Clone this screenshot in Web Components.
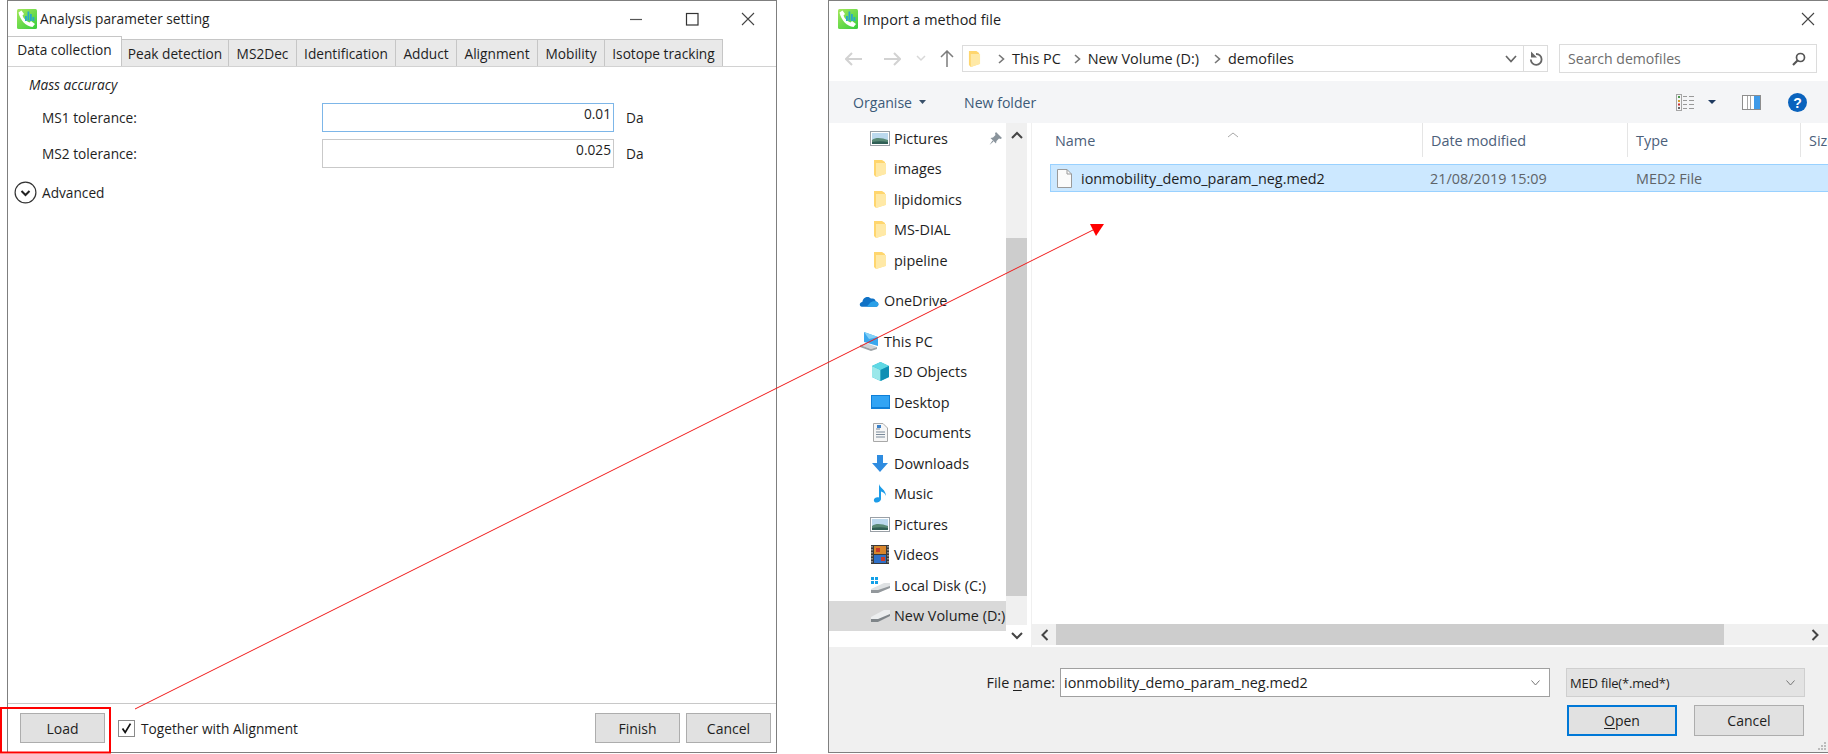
<!DOCTYPE html>
<html>
<head>
<meta charset="utf-8">
<title>Analysis parameter setting</title>
<style>
  html, body { margin: 0; padding: 0; background: #fff; }
  body { width: 1828px; height: 754px; overflow: hidden; position: relative; display: flex; align-items: flex-start; font-family: "Open Sans", "Liberation Sans", sans-serif; color: #1e1e1e; }
</style>
</head>
<body>
<param-window></param-window>
<file-dialog></file-dialog>
<arrow-overlay></arrow-overlay>

<script>
const FONT = '"Open Sans", "Liberation Sans", sans-serif';

class AppIcon extends HTMLElement {
    constructor() {
        super();
        this.attachShadow({ mode: 'open' });
        this.shadowRoot.innerHTML = `
            <style>
                :host { display: block; width: 20px; height: 20px; flex: none; }
                svg { display: block; }
            </style>
            <svg width="20" height="20" viewBox="0 0 20 20">
                <defs>
                    <linearGradient id="g" x1="0" y1="0" x2="0.8" y2="1">
                        <stop offset="0" stop-color="#a6e85c"/>
                        <stop offset="1" stop-color="#3fd03f"/>
                    </linearGradient>
                </defs>
                <rect width="20" height="20" rx="1.5" fill="url(#g)"/>
                <path d="M1.5 3.5 L4.5 1.5 L7 5 L5.5 6.5 C6.5 9.5 9 12 12.5 13.5 L14 12 L18 15 L15.5 18 C9 17.5 3 11 1.5 3.5 Z" fill="#fff"/>
                <rect x="8" y="7" width="1.8" height="5" fill="#28a8c8"/>
                <rect x="10.5" y="2.5" width="1.8" height="9" fill="#28a8c8"/>
                <rect x="13" y="5" width="1.8" height="7" fill="#28a8c8"/>
                <rect x="15.5" y="8" width="1.8" height="4" fill="#28a8c8"/>
            </svg>
        `;
    }
}
customElements.define('app-icon', AppIcon);

class WinButton extends HTMLElement {
    constructor() {
        super();
        this.attachShadow({ mode: 'open' });
        this.shadowRoot.innerHTML = `
            <style>
                :host {
                    display: flex; align-items: center; justify-content: center;
                    box-sizing: border-box; height: 30px; width: 85px; flex: none;
                    background: #e1e1e1; border: 1px solid #adadad;
                    font-size: 14px; color: #1e1e1e;
                }
                :host([primary]) { border: 2px solid #0078d7; }
            </style>
            <slot></slot>
        `;
    }
}
customElements.define('win-button', WinButton);

class ParamRow extends HTMLElement {
    constructor() {
        super();
        this.attachShadow({ mode: 'open' });
        const focus = this.hasAttribute('focus');
        this.shadowRoot.innerHTML = `
            <style>
                :host { display: flex; align-items: center; height: 29px; padding-left: 34px; }
                .label { width: 280px; flex: none; }
                .box {
                    box-sizing: border-box; width: 292px; height: 29px; flex: none;
                    border: 1.5px solid ${focus ? '#7db6e8' : '#c9c9c9'};
                    text-align: right; padding: 0 2px 0 0; line-height: 19px;
                }
                .unit { margin-left: 12px; }
            </style>
            <span class="label">${this.getAttribute('label')}</span>
            <div class="box">${this.getAttribute('value')}</div>
            <span class="unit">Da</span>
        `;
    }
}
customElements.define('param-row', ParamRow);

class ParamWindow extends HTMLElement {
    constructor() {
        super();
        this.attachShadow({ mode: 'open' });
        const tabs = [
            ['Data collection', 114], ['Peak detection', 107], ['MS2Dec', 68], ['Identification', 99],
            ['Adduct', 61], ['Alignment', 81], ['Mobility', 67], ['Isotope tracking', 118]
        ];
        this.shadowRoot.innerHTML = `
            <style>
                :host {
                    display: flex; flex-direction: column; flex: none; box-sizing: border-box;
                    width: 770px; height: 753px; margin-left: 7px;
                    border: 1px solid #7f7f7f; border-width: 1px 1.5px 1.5px 1.5px;
                    font-family: ${FONT}; font-size: 13.7px; color: #1e1e1e;
                }
                .title { display: flex; align-items: center; height: 35px; padding-left: 9px; flex: none; }
                .title span { margin-left: 3px; flex: 1; }
                .ctl { width: 56px; height: 35px; display: flex; align-items: center; justify-content: center; }
                .tabs { display: flex; align-items: flex-end; height: 30px; flex: none; }
                .tab {
                    box-sizing: border-box; height: 27px; background: #e9e9e9;
                    border: 1.5px solid #c6c6c6; border-bottom: 0; border-left-width: 0;
                    display: flex; align-items: center; justify-content: center; flex: none; white-space: nowrap;
                }
                .tab.on { height: 30px; background: #fff; border-left-width: 0; padding-bottom: 5px; }
                .panel { flex: 1; border-top: 1.5px solid #d2d2d2; padding-top: 8px; display: flex; flex-direction: column; margin-top: -0.5px; }
                .group { font-style: italic; padding-left: 21px; height: 20px; line-height: 20px; margin-bottom: 8px; }
                param-row + param-row { margin-top: 7px; }
                .adv { display: flex; align-items: center; gap: 5px; padding-left: 6px; margin-top: 13px; }
                .foot { display: flex; align-items: center; height: 49px; flex: none; border-top: 1.5px solid #c8c8c8; padding: 0 5px 0 12px; box-sizing: border-box; }
                .check { display: flex; align-items: center; margin-left: 13px; flex: 1; }
                .box { box-sizing: border-box; width: 17px; height: 17px; border: 1px solid #8a8a8a; margin-right: 6px; display: block; }
                win-button + win-button { margin-left: 6px; }
            </style>
            <div class="title">
                <app-icon></app-icon><span>Analysis parameter setting</span>
                <div class="ctl"><svg width="14" height="14"><path d="M1 7.5H13" stroke="#555" stroke-width="1.2"/></svg></div>
                <div class="ctl"><svg width="14" height="14"><rect x="1.5" y="1.5" width="11.5" height="11.5" fill="none" stroke="#333" stroke-width="1.2"/></svg></div>
                <div class="ctl"><svg width="14" height="14"><path d="M1 1L13 13M13 1L1 13" stroke="#444" stroke-width="1.1"/></svg></div>
            </div>
            <div class="tabs">
                ${tabs.map((t, i) => `<div class="tab${i === 0 ? ' on' : ''}" style="width:${t[1]}px">${t[0]}</div>`).join('')}
            </div>
            <div class="panel">
                <div class="group">Mass accuracy</div>
                <param-row label="MS1 tolerance:" value="0.01" focus></param-row>
                <param-row label="MS2 tolerance:" value="0.025"></param-row>
                <div class="adv">
                    <svg width="23" height="23" viewBox="0 0 23 23"><circle cx="11.5" cy="11.5" r="10.4" fill="none" stroke="#333" stroke-width="1.2"/><path d="M7.5 10L11.5 14L15.5 10" fill="none" stroke="#222" stroke-width="2"/></svg>
                    <span>Advanced</span>
                </div>
            </div>
            <div class="foot">
                <win-button>Load</win-button>
                <div class="check">
                    <svg class="box" viewBox="0 0 17 17"><path d="M4 8.5L7 13L13 3" fill="none" stroke="#111" stroke-width="2"/></svg>
                    <span>Together with Alignment</span>
                </div>
                <win-button>Finish</win-button>
                <win-button>Cancel</win-button>
            </div>
        `;
    }
}
customElements.define('param-window', ParamWindow);

const FOLDER = `<svg width="14" height="19" viewBox="0 0 14 19"><path d="M1 1H9L12 3V15L3 18L1 16Z" fill="#ffd66e"/><path d="M3 4H13V15L3 18Z" fill="#ffe9a6"/></svg>`;
const PICTURE = `<svg width="20" height="15" viewBox="0 0 20 15"><rect x=".5" y=".5" width="19" height="14" fill="#fff" stroke="#9aa0a6"/><rect x="2" y="2" width="16" height="11" fill="#bcd9ee"/><path d="M2 9C6 6 12 7 18 9V13H2Z" fill="#5a8a76"/><path d="M2 11C7 10 13 10 18 11V13H2Z" fill="#2f5f55"/></svg>`;
const ICONS = {
    folder: FOLDER,
    picture: PICTURE,
    onedrive: `<svg width="21" height="13" viewBox="0 0 21 13"><path d="M3 13C0 13 0 8.500 3.500 8C4 3 10 1 12.500 4.500C16 3.500 17.500 6 17.500 7.500C21 7.500 21.500 13 18 13Z" fill="#0f72c6"/><path d="M8 13L12 8.500C14 7 17 7 17.500 7.500C21 7.500 21.500 13 18 13Z" fill="#2aa0e8"/></svg>`,
    pc: `<svg width="20" height="20" viewBox="0 0 20 20"><path d="M5 1L19 6V15L5 11Z" fill="#3aa8ee"/><path d="M5 1L19 6L10 8Z" fill="#84d0f6"/><path d="M1 14L12 18L18 16L7 12Z" fill="#cfd3d6"/><path d="M1 14V16L12 20L18 18V16L12 18Z" fill="#9ca2a6"/></svg>`,
    cube: `<svg width="19" height="19" viewBox="0 0 19 19"><path d="M9.500 0L18 4V15L9.500 19L1 15V4Z" fill="#29b6cf"/><path d="M1 4L9.500 8V19L1 15Z" fill="#9be8ea"/><path d="M9.500 0L18 4L9.500 8L1 4Z" fill="#5fd8e4"/><path d="M9.500 8L18 4V15L9.500 19Z" fill="#0f8fb4"/></svg>`,
    desktop: `<svg width="19" height="14" viewBox="0 0 19 14"><rect width="19" height="14" fill="#0f7fd8"/><rect x="1" y="1" width="17" height="11" fill="#32a4f4"/></svg>`,
    docs: `<svg width="15" height="19" viewBox="0 0 15 19"><path d="M.5.5H10L14.500 5V18.500H.5Z" fill="#f6f6f6" stroke="#a8a8a8"/><path d="M3 6H7M3 9H12M3 11.500H12M3 14H12" stroke="#7a8a9a"/><path d="M4 2H8V5H4Z" fill="#3a80c8"/></svg>`,
    down: `<svg width="16" height="17" viewBox="0 0 16 17"><path d="M5 0H11V8H16L8 17L0 8H5Z" fill="#2f8ce0"/></svg>`,
    music: `<svg width="14" height="19" viewBox="0 0 14 19"><path d="M6 0C7 4 13 6 13 12C12 9 9.500 8 8 7.500V15C8 18 2 20 1 17C0 14 4 12.500 6 13.500Z" fill="#1c9ce8"/></svg>`,
    video: `<svg width="18" height="19" viewBox="0 0 18 19"><rect width="18" height="19" fill="#3a3a3a"/><rect x="3" y="1" width="12" height="8" fill="#d8862c"/><rect x="3" y="10" width="12" height="8" fill="#2f70c8"/><path d="M5 3H9V7H5ZM10 12H14V16H10Z" fill="#c83a2a"/><path d="M1 1V18M17 1V18" stroke="#ddd" stroke-dasharray="1.500 1.500"/></svg>`,
    cdrive: `<svg width="19" height="16" viewBox="0 0 19 16"><path d="M0 0H3V3H0ZM4 0H7V3H4ZM0 4H3V7H0ZM4 4H7V7H4Z" fill="#12a0e8"/><path d="M0 12L13 6H19V10L7 16H0Z" fill="#dfe2e4"/><path d="M0 13H7L19 9V11L7 16H0Z" fill="#93989c"/></svg>`,
    ddrive: `<svg width="19" height="12" viewBox="0 0 19 12"><path d="M0 7L13 0H19V5L7 12H0Z" fill="#eceeef"/><path d="M0 9H7L19 4V6L7 12H0Z" fill="#7f8589"/></svg>`
};

class NavItem extends HTMLElement {
    constructor() {
        super();
        this.attachShadow({ mode: 'open' });
        const top = this.hasAttribute('top');
        this.shadowRoot.innerHTML = `
            <style>
                :host {
                    display: flex; align-items: center; height: 30.5px; flex: none;
                    padding-left: ${top ? '30px' : '41px'}; position: relative; box-sizing: border-box;
                    white-space: nowrap; color: #1e1e1e;
                }
                :host([selected]) { background: #d9d9d9; }
                .ico { width: 20px; display: flex; justify-content: center; margin-right: ${top ? '5px' : '4px'}; flex: none; }
                .pin { margin-left: auto; margin-right: 4px; display: flex; }
            </style>
            <div class="ico">${ICONS[this.getAttribute('icon')]}</div>
            <span>${this.getAttribute('text')}</span>
            ${this.hasAttribute('pin') ? `<div class="pin"><svg width="13" height="13" viewBox="0 0 13 13"><path d="M7 0L13 6L11.500 7L10 6.500L7.500 9L7 11.500L1.500 6L4 5.500L6.500 3L6 1.500ZM3.500 8.500L4.500 9.500L.5 13Z" fill="#8a949c"/></svg></div>` : ''}
        `;
    }
}
customElements.define('nav-item', NavItem);

class FileDialog extends HTMLElement {
    constructor() {
        super();
        this.attachShadow({ mode: 'open' });
        this.shadowRoot.innerHTML = `
            <style>
                :host {
                    display: flex; flex-direction: column; flex: none; box-sizing: border-box;
                    width: 1000px; height: 753px; margin-left: 51px;
                    border: 1px solid #7f7f7f; border-width: 1px 0 1.5px 1.5px;
                    font-family: ${FONT}; font-size: 14.4px; color: #1e1e1e;
                }
                .title { display: flex; align-items: center; height: 35px; padding-left: 9px; flex: none; }
                .title span { margin-left: 5px; flex: 1; padding-top: 1px; }
                .close { margin-right: 13px; display: flex; }
                .addr { display: flex; align-items: center; height: 45px; flex: none; padding-left: 16px; }
                .navbtn { display: flex; flex: none; }
                .path {
                    box-sizing: border-box; display: flex; align-items: center; width: 586px; height: 27px;
                    margin-left: 8px; border: 1.5px solid #dcdcdc; padding-left: 5px; flex: none;
                }
                .crumb { margin-left: 7px; }
                .sep { margin-left: 13px; display: flex; }
                .sep.first { margin-left: 17px; }
                .sep.last { margin-left: 15px; }
                .path .right { margin-left: auto; display: flex; align-items: center; height: 100%; }
                .refresh { border-left: 1px solid #dcdcdc; width: 23px; height: 100%; display: flex; align-items: center; justify-content: center; margin-left: 6px; }
                .search {
                    box-sizing: border-box; display: flex; align-items: center; justify-content: space-between;
                    width: 258px; height: 29px; margin-left: 11px; border: 1.5px solid #dcdcdc; padding: 0 10px 0 8px; color: #6d6d6d; flex: none; font-size: 14.1px;
                }
                .tool { display: flex; align-items: center; height: 42px; background: #f4f5f7; flex: none; padding-left: 24px; color: #3c5a78; font-size: 14.1px; }
                .tool .spacer { flex: 1; }
                .main { flex: 1; display: flex; min-height: 0; }
                .nav { width: 177px; flex: none; display: flex; flex-direction: column; overflow: hidden; }
                .gap { height: 10px; flex: none; }
                .vscroll { width: 21px; flex: none; display: flex; flex-direction: column; background: #f0f0f0; }
                .vscroll .thumb { background: #cdcdcd; height: 358px; margin-top: 115px; flex: none; }
                .sb-up, .sb-down { position: relative; display: flex; justify-content: center; align-items: center; flex: none; }
                .sb-up { height: 0; top: 12px; }
                .sb-down { margin-top: auto; height: 22px; background: #fff; }
                .list { flex: 1; display: flex; flex-direction: column; margin-left: 4px; border-left: 1.5px solid #f0f0f0; min-width: 0; position: relative; }
                .head { display: flex; height: 34px; flex: none; color: #4c607a; }
                .col { box-sizing: border-box; padding-left: 8px; padding-top: 8px; border-right: 1px solid #e5e5e5; flex: none; white-space: nowrap; }
                .caret { position: absolute; left: 195px; top: 0; }
                .rows { flex: 1; padding: 7px 0 0 18px; }
                .row { box-sizing: border-box; display: flex; align-items: center; height: 28px; background: #cce8ff; border: 1px solid #99d1ff; border-right: 0; padding-top: 1px; }
                .row .name { width: 379px; padding-left: 6px; display: flex; align-items: center; gap: 9px; flex: none; box-sizing: border-box; }
                .row .date { width: 206px; flex: none; color: #5f6468; }
                .row .type { color: #5f6468; }
                .hscroll { height: 21px; flex: none; background: #f0f0f0; display: flex; align-items: center; padding: 0 9px; margin-bottom: 2px; }
                .hscroll .thumb { background: #cdcdcd; height: 21px; width: 668px; margin-left: 7px; flex: none; }
                .hscroll svg:last-child { margin-left: auto; }
                .bottom { height: 105px; flex: none; background: #f0f0f0; position: relative; display: flex; flex-direction: column; padding: 21px 23px 0 0; box-sizing: border-box; }
                .namerow { display: flex; align-items: center; justify-content: flex-end; }
                .fname { box-sizing: border-box; width: 490px; height: 29px; background: #fff; border: 1px solid #a0a0a0; margin-left: 5px; display: flex; align-items: center; justify-content: space-between; padding: 0 9px 0 3px; }
                .combo { box-sizing: border-box; width: 239px; height: 29px; background: #e3e3e3; border: 1px solid #cfcfcf; margin-left: 16px; display: flex; align-items: center; justify-content: space-between; padding: 0 9px 0 3px; font-size: 13px; letter-spacing: -0.2px; }
                .btnrow { display: flex; justify-content: flex-end; gap: 17px; margin-top: 8px; margin-right: 1px; }
                .btnrow win-button { width: 110px; height: 31px; }
                u { text-decoration-thickness: 1px; text-underline-offset: 2px; }
                .grip { position: absolute; right: 2px; bottom: 2px; display: flex; }
            </style>
            <div class="title">
                <app-icon></app-icon><span>Import a method file</span>
                <div class="close"><svg width="14" height="14"><path d="M1 1L13 13M13 1L1 13" stroke="#444" stroke-width="1.1"/></svg></div>
            </div>
            <div class="addr">
                <div class="navbtn"><svg width="17" height="14" viewBox="0 0 17 14"><path d="M7 1L1 7L7 13M1 7H17" fill="none" stroke="#d2d2d2" stroke-width="2"/></svg></div>
                <div class="navbtn" style="margin-left:22px"><svg width="17" height="14" viewBox="0 0 17 14"><path d="M10 1L16 7L10 13M16 7H0" fill="none" stroke="#d2d2d2" stroke-width="2"/></svg></div>
                <div class="navbtn" style="margin-left:15px"><svg width="10" height="7" viewBox="0 0 10 7"><path d="M1 1L5 5L9 1" fill="none" stroke="#d8d8d8" stroke-width="1.500"/></svg></div>
                <div class="navbtn" style="margin-left:14px"><svg width="14" height="17" viewBox="0 0 14 17"><path d="M1 7L7 1L13 7M7 1V17" fill="none" stroke="#7c7c7c" stroke-width="1.500"/></svg></div>
                <div class="path">
                    ${FOLDER.replace('width="14" height="19"', 'width="13" height="18"')}
                    <span class="sep first"><svg width="7" height="10" viewBox="0 0 7 10"><path d="M1 1L5.500 5L1 9" fill="none" stroke="#777" stroke-width="1.600"/></svg></span>
                    <span class="crumb">This PC</span>
                    <span class="sep"><svg width="7" height="10" viewBox="0 0 7 10"><path d="M1 1L5.500 5L1 9" fill="none" stroke="#777" stroke-width="1.600"/></svg></span>
                    <span class="crumb">New Volume (D:)</span>
                    <span class="sep last"><svg width="7" height="10" viewBox="0 0 7 10"><path d="M1 1L5.500 5L1 9" fill="none" stroke="#777" stroke-width="1.600"/></svg></span>
                    <span class="crumb">demofiles</span>
                    <div class="right">
                        <svg width="12" height="8" viewBox="0 0 12 8"><path d="M1 1L6 6.500L11 1" fill="none" stroke="#666" stroke-width="1.700"/></svg>
                        <div class="refresh"><svg width="14" height="15" viewBox="0 0 14 15"><path d="M7 3A5.400 5.400 0 1 1 1.800 8.500" fill="none" stroke="#666" stroke-width="1.800"/><path d="M2 0.500V6.500H8Z" fill="#666"/></svg></div>
                    </div>
                </div>
                <div class="search">
                    <span>Search demofiles</span>
                    <svg width="14" height="14" viewBox="0 0 14 14"><circle cx="8.500" cy="5.500" r="4" fill="none" stroke="#555" stroke-width="1.700"/><path d="M5.500 8.500L1 13" stroke="#555" stroke-width="2.200"/></svg>
                </div>
            </div>
            <div class="tool">
                <span>Organise</span>
                <svg style="margin-left:7px" width="7" height="4"><path d="M0 0H7L3.500 4Z" fill="#39506a"/></svg>
                <span style="margin-left:38px">New folder</span>
                <span class="spacer"></span>
                <svg width="19" height="17" viewBox="0 0 19 17"><rect x=".5" y=".5" width="5" height="16" fill="#f4f5f7" stroke="#a5a5a5"/><path d="M2 3H4" stroke="#4a9a4a" stroke-width="2"/><path d="M2 7H4" stroke="#d8a030" stroke-width="2"/><path d="M2 10.500H4" stroke="#c83030" stroke-width="2"/><path d="M2 14H4" stroke="#666" stroke-width="2"/><path d="M7 2.500H11M13 2.500H18M7 6.500H11M13 6.500H18M7 10.500H11M13 10.500H18M7 14.500H11M13 14.500H18" stroke="#999" stroke-width="1.200"/></svg>
                <svg style="margin-left:13px" width="8" height="4"><path d="M0 0H8L4 4Z" fill="#1f3a60"/></svg>
                <svg style="margin-left:26px" width="19" height="15" viewBox="0 0 19 15"><rect x=".5" y=".5" width="18" height="14" fill="#fff" stroke="#8d8d8d"/><rect x="12" y="1" width="6" height="13" fill="#3f9ae8"/><path d="M5.500 1V14M8.500 1V14" stroke="#a8a8a8"/></svg>
                <svg style="margin-left:27px;margin-right:21px" width="19" height="19" viewBox="0 0 19 19"><circle cx="9.500" cy="9.500" r="9.500" fill="#0a63bd"/><text x="9.500" y="14.500" text-anchor="middle" fill="#fff" font-family="'Liberation Sans'" font-size="14" font-weight="700">?</text></svg>
            </div>
            <div class="main">
                <div class="nav">
                    <nav-item icon="picture" text="Pictures" pin></nav-item>
                    <nav-item icon="folder" text="images"></nav-item>
                    <nav-item icon="folder" text="lipidomics"></nav-item>
                    <nav-item icon="folder" text="MS-DIAL"></nav-item>
                    <nav-item icon="folder" text="pipeline"></nav-item>
                    <div class="gap"></div>
                    <nav-item icon="onedrive" text="OneDrive" top></nav-item>
                    <div class="gap"></div>
                    <nav-item icon="pc" text="This PC" top></nav-item>
                    <nav-item icon="cube" text="3D Objects"></nav-item>
                    <nav-item icon="desktop" text="Desktop"></nav-item>
                    <nav-item icon="docs" text="Documents"></nav-item>
                    <nav-item icon="down" text="Downloads"></nav-item>
                    <nav-item icon="music" text="Music"></nav-item>
                    <nav-item icon="picture" text="Pictures"></nav-item>
                    <nav-item icon="video" text="Videos"></nav-item>
                    <nav-item icon="cdrive" text="Local Disk (C:)"></nav-item>
                    <nav-item icon="ddrive" text="New Volume (D:)" selected></nav-item>
                </div>
                <div class="vscroll">
                    <div class="sb-up"><svg width="12" height="8" viewBox="0 0 12 8"><path d="M1 7L6 2L11 7" fill="none" stroke="#444" stroke-width="2"/></svg></div>
                    <div class="thumb"></div>
                    <div class="sb-down"><svg width="12" height="8" viewBox="0 0 12 8"><path d="M1 1L6 6L11 1" fill="none" stroke="#444" stroke-width="2"/></svg></div>
                </div>
                <div class="list">
                    <div class="caret"><svg width="12" height="6" viewBox="0 0 12 6"><path d="M1 5L6 1L11 5" fill="none" stroke="#a8a8a8"/></svg></div>
                    <div class="head">
                        <div class="col" style="width:391px;padding-left:23px">Name</div>
                        <div class="col" style="width:205px">Date modified</div>
                        <div class="col" style="width:173px">Type</div>
                        <div class="col" style="border:0">Size</div>
                    </div>
                    <div class="rows">
                        <div class="row">
                            <div class="name">
                                <svg width="15" height="19" viewBox="0 0 15 19"><path d="M.5.5H10L14.500 5V18.500H.5Z" fill="#fbfbfb" stroke="#9a9a9a"/><path d="M10 .5V5H14.500" fill="none" stroke="#9a9a9a"/></svg>
                                <span>ionmobility_demo_param_neg.med2</span>
                            </div>
                            <div class="date">21/08/2019 15:09</div>
                            <div class="type">MED2 File</div>
                        </div>
                    </div>
                    <div class="hscroll">
                        <svg width="8" height="12" viewBox="0 0 8 12"><path d="M6.500 1L1.500 6L6.500 11" fill="none" stroke="#444" stroke-width="2"/></svg>
                        <div class="thumb"></div>
                        <svg width="8" height="12" viewBox="0 0 8 12"><path d="M1.500 1L6.500 6L1.500 11" fill="none" stroke="#444" stroke-width="2"/></svg>
                    </div>
                </div>
            </div>
            <div class="bottom">
                <div class="namerow">
                    <span>File <u>n</u>ame:</span>
                    <div class="fname"><span>ionmobility_demo_param_neg.med2</span><svg width="9" height="6" viewBox="0 0 9 6"><path d="M.5.5L4.500 5L8.500.5" fill="none" stroke="#777"/></svg></div>
                    <div class="combo"><span>MED file(*.med*)</span><svg width="9" height="6" viewBox="0 0 9 6"><path d="M.5.5L4.500 5L8.500.5" fill="none" stroke="#777"/></svg></div>
                </div>
                <div class="btnrow">
                    <win-button primary><span><u>O</u>pen</span></win-button>
                    <win-button>Cancel</win-button>
                </div>
                <div class="grip"><svg width="9" height="9"><path d="M7 1h2v2H7zM4 4h2v2H4zM7 4h2v2H7zM1 7h2v2H1zM4 7h2v2H4zM7 7h2v2H7z" fill="#bcbcbc"/></svg></div>
            </div>
        `;
    }
}
customElements.define('file-dialog', FileDialog);

// red annotation drawn over both windows
class ArrowOverlay extends HTMLElement {
    constructor() {
        super();
        this.attachShadow({ mode: 'open' });
        this.shadowRoot.innerHTML = `
            <style>
                :host { position: absolute; left: 0; top: 0; width: 1828px; height: 754px; pointer-events: none; }
                svg { display: block; }
            </style>
            <svg width="1828" height="754">
                <rect x="1" y="708" width="109" height="44.500" fill="none" stroke="#ff0000" stroke-width="2"/>
                <path d="M135 709L1095 229" stroke="#f01818" stroke-width="1"/>
                <path d="M1090 224H1104L1096 236Z" fill="#ff0000"/>
            </svg>
        `;
    }
}
customElements.define('arrow-overlay', ArrowOverlay);
</script>
</body>
</html>
